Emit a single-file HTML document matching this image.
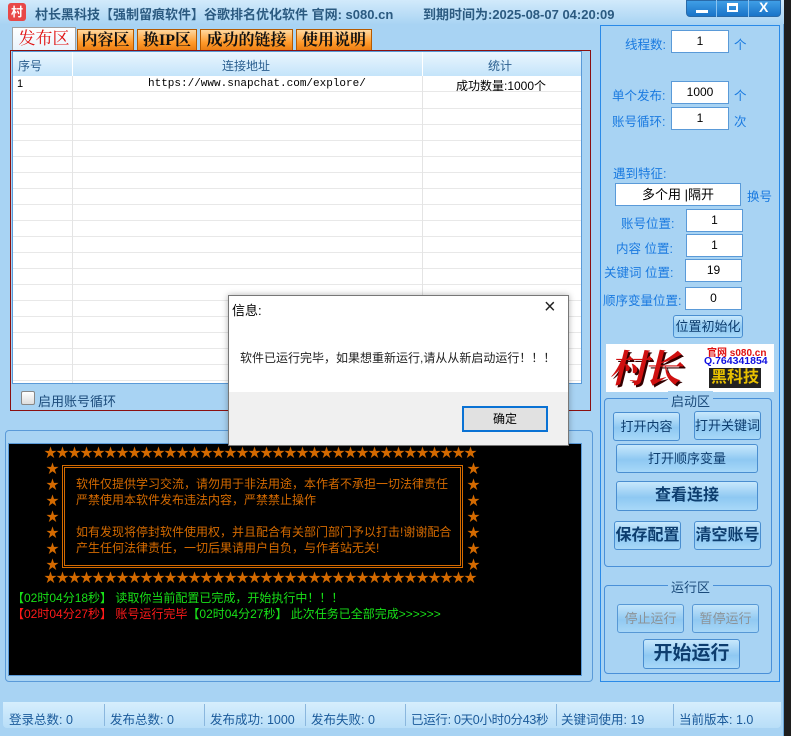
<!DOCTYPE html>
<html><head><meta charset="utf-8"><style>
*{margin:0;padding:0;box-sizing:border-box}
body{width:791px;height:736px;overflow:hidden;background:#1e1e1e;font-family:"Liberation Sans","Noto Sans CJK SC",sans-serif;font-size:12px;position:relative}
.a{position:absolute}
.win{left:0;top:0;width:784px;height:736px;background:#a8d3f3;border-right:1px solid #6aa5d8}
.tb{left:0;top:0;width:784px;height:24px;background:linear-gradient(#d2eafb,#a9d4f3)}
.t{white-space:nowrap}
.tab{top:29px;height:22px;border:1px solid #b55a00;border-bottom:none;background:linear-gradient(#ffd9a0,#ff9a2a 60%,#e97a10);font-size:16px;font-weight:bold;color:#111;text-align:center;line-height:21px;font-family:"Liberation Serif","Noto Serif CJK SC",serif}
.inp{background:#fff;border:1px solid #5a9ad8;text-align:center;font-size:12px;line-height:21px;height:23px}
.lb{color:#1a7ae0;font-size:12.5px;white-space:nowrap}
.btn{border:1px solid #4a8ed0;border-radius:3px;background:linear-gradient(#c8e8fc,#8ec8f2 55%,#a8d8f8);color:#0d3d6e;text-align:center;white-space:nowrap}
.stars{display:flex;color:#d46a00;font-size:13px;line-height:16px}
.stars span{width:12px;text-align:center}
.st{color:#d46a00;font-size:13px;line-height:16px}
.ct{color:#d46a00;font-size:12px;line-height:16px;white-space:nowrap}
.sb{top:709px;color:#1a5a9a;font-size:12.5px;white-space:nowrap}
.sep{top:704px;width:1px;height:22px;background:#8ab7de}
</style></head><body>
<div class="a win"></div>
<div class="a tb"></div>
<div class="a" style="left:8px;top:3px;width:18px;height:18px;background:#e84848;border-radius:3px;color:#fff;font-weight:bold;font-size:12px;text-align:center;line-height:18px">村</div>
<div class="a t" style="left:35px;top:4px;font-size:13px;font-weight:bold;color:#2b5a80">村长黑科技【强制留痕软件】谷歌排名优化软件 官网: s080.cn</div>
<div class="a t" style="left:423px;top:4px;font-size:13px;font-weight:bold;color:#2b5a80">到期时间为:2025-08-07 04:20:09</div>
<div class="a" style="left:686px;top:0;width:95px;height:17px;background:linear-gradient(#3f9ee6,#1a74c8);border-radius:0 0 4px 4px;border:1px solid #2a6aa8"></div>
<div class="a" style="left:716px;top:0;width:1px;height:17px;background:#8cc4f0"></div>
<div class="a" style="left:748px;top:0;width:1px;height:17px;background:#8cc4f0"></div>
<div class="a" style="left:696px;top:10px;width:12px;height:3px;background:#fff"></div>
<div class="a" style="left:727px;top:3px;width:11px;height:9px;border:2px solid #fff;border-top-width:3px"></div>
<div class="a t" style="left:759px;top:-1px;color:#fff;font-weight:bold;font-size:14px">X</div>

<div class="a tab" style="left:12px;width:64px;background:linear-gradient(#fff,#e6f2fb);color:#e01010;font-weight:normal;font-size:17px;top:27px;height:25px;border-color:#a0a0a0">发布区</div>
<div class="a tab" style="left:77px;width:57px">内容区</div>
<div class="a tab" style="left:137px;width:60px">换IP区</div>
<div class="a tab" style="left:200px;width:93px">成功的链接</div>
<div class="a tab" style="left:296px;width:76px">使用说明</div>

<div class="a" style="left:10px;top:50px;width:581px;height:361px;border:1px solid #8b1010"></div>
<div class="a" style="left:12px;top:51px;width:570px;height:333px;background:#fff;border:1px solid #5a9ad8;background-image:repeating-linear-gradient(#fff 0 15px,#e8e8e8 15px 16px);background-position:0 41px"></div>
<div class="a" style="left:13px;top:52px;width:568px;height:24px;background:linear-gradient(#eaf6fe,#c4e4fa)"></div>
<div class="a" style="left:13px;top:76px;width:568px;height:16px;background:#fff;border-bottom:1px solid #e8e8e8"></div>
<div class="a" style="left:72px;top:52px;width:1px;height:331px;background:#e4e4e4"></div>
<div class="a" style="left:422px;top:52px;width:1px;height:331px;background:#e4e4e4"></div>
<div class="a" style="left:72px;top:52px;width:1px;height:24px;background:#fff"></div>
<div class="a" style="left:422px;top:52px;width:1px;height:24px;background:#fff"></div>
<div class="a t" style="left:18px;top:57px;color:#2a5e8e">序号</div>
<div class="a t" style="left:222px;top:57px;color:#2a5e8e">连接地址</div>
<div class="a t" style="left:488px;top:57px;color:#2a5e8e">统计</div>
<div class="a t" style="left:17px;top:78px;font-size:11px">1</div>
<div class="a t" style="left:148px;top:78px;font-size:11px;font-family:'Liberation Mono',monospace">https://www.snapchat.com/explore/</div>
<div class="a t" style="left:456px;top:77px;font-size:12px">成功数量:1000个</div>
<div class="a" style="left:21px;top:391px;width:14px;height:14px;border:1px solid #888;border-radius:2px;background:linear-gradient(#fff,#ddd)"></div>
<div class="a t" style="left:38px;top:391px;color:#1a4a7a;font-size:13px">启用账号循环</div>

<div class="a" style="left:5px;top:430px;width:588px;height:252px;border:1px solid #5a9ad8;border-radius:4px"></div>
<div class="a" style="left:8px;top:443px;width:574px;height:233px;background:#000;border:1px solid #5a9ad8"></div>
<div class="a stars" style="left:44px;top:445px"><span>★</span><span>★</span><span>★</span><span>★</span><span>★</span><span>★</span><span>★</span><span>★</span><span>★</span><span>★</span><span>★</span><span>★</span><span>★</span><span>★</span><span>★</span><span>★</span><span>★</span><span>★</span><span>★</span><span>★</span><span>★</span><span>★</span><span>★</span><span>★</span><span>★</span><span>★</span><span>★</span><span>★</span><span>★</span><span>★</span><span>★</span><span>★</span><span>★</span><span>★</span><span>★</span><span>★</span></div>
<div class="a stars" style="left:44px;top:570px"><span>★</span><span>★</span><span>★</span><span>★</span><span>★</span><span>★</span><span>★</span><span>★</span><span>★</span><span>★</span><span>★</span><span>★</span><span>★</span><span>★</span><span>★</span><span>★</span><span>★</span><span>★</span><span>★</span><span>★</span><span>★</span><span>★</span><span>★</span><span>★</span><span>★</span><span>★</span><span>★</span><span>★</span><span>★</span><span>★</span><span>★</span><span>★</span><span>★</span><span>★</span><span>★</span><span>★</span></div>
<div class="a st" style="left:46px;top:461px">★<br>★<br>★<br>★<br>★<br>★<br>★</div>
<div class="a st" style="left:467px;top:461px">★<br>★<br>★<br>★<br>★<br>★<br>★</div>
<div class="a" style="left:62px;top:465px;width:401px;height:103px;border:3px double #d46a00"></div>
<div class="a ct" style="left:76px;top:476px">软件仅提供学习交流，请勿用于非法用途，本作者不承担一切法律责任</div>
<div class="a ct" style="left:76px;top:492px">严禁使用本软件发布违法内容，严禁禁止操作</div>
<div class="a ct" style="left:76px;top:524px">如有发现将停封软件使用权，并且配合有关部门部门予以打击!谢谢配合</div>
<div class="a ct" style="left:76px;top:540px">产生任何法律责任，一切后果请用户自负，与作者站无关!</div>
<div class="a t" style="left:12px;top:589px;color:#18e018;font-size:12px">【02时04分18秒】 读取你当前配置已完成，开始执行中！！！</div>
<div class="a t" style="left:12px;top:605px;color:#ff1a1a;font-size:12px">【02时04分27秒】 账号运行完毕<span style="color:#18e018">【02时04分27秒】 此次任务已全部完成&gt;&gt;&gt;&gt;&gt;&gt;</span></div>

<div class="a" style="left:600px;top:25px;width:180px;height:657px;border:1px solid #2a8ae8"></div>
<div class="a lb" style="left:625px;top:34px">线程数:</div>
<div class="a inp" style="left:671px;top:30px;width:58px">1</div>
<div class="a lb" style="left:734px;top:34px">个</div>
<div class="a lb" style="left:612px;top:85px">单个发布:</div>
<div class="a inp" style="left:671px;top:81px;width:58px">1000</div>
<div class="a lb" style="left:734px;top:85px">个</div>
<div class="a lb" style="left:612px;top:111px">账号循环:</div>
<div class="a inp" style="left:671px;top:107px;width:58px">1</div>
<div class="a lb" style="left:734px;top:111px">次</div>
<div class="a lb" style="left:613px;top:163px">遇到特征:</div>
<div class="a inp" style="left:615px;top:183px;width:126px;font-size:13px">多个用 |隔开</div>
<div class="a lb" style="left:747px;top:186px">换号</div>
<div class="a lb" style="left:621px;top:213px">账号位置:</div>
<div class="a inp" style="left:686px;top:209px;width:57px">1</div>
<div class="a lb" style="left:616px;top:238px">内容 位置:</div>
<div class="a inp" style="left:686px;top:234px;width:57px">1</div>
<div class="a lb" style="left:604px;top:262px">关键词 位置:</div>
<div class="a inp" style="left:685px;top:259px;width:57px">19</div>
<div class="a lb" style="left:603px;top:290px">顺序变量位置:</div>
<div class="a inp" style="left:685px;top:287px;width:57px">0</div>
<div class="a btn" style="left:673px;top:315px;width:70px;height:23px;line-height:21px;font-size:13px">位置初始化</div>

<div class="a" style="left:606px;top:344px;width:168px;height:48px;background:#fff"></div>
<div class="a t" style="left:609px;top:342px;font-size:38px;font-weight:bold;font-style:italic;color:#d01010;letter-spacing:-4px;font-family:'Noto Serif CJK SC',serif;line-height:48px;text-shadow:2px 2px 0 #300">村长</div>
<div class="a t" style="left:707px;top:344px;font-size:10px;font-weight:bold;color:#e01010">官网 s080.cn</div>
<div class="a t" style="left:704px;top:355px;font-size:10.5px;font-weight:bold;color:#1010e0">Q.764341854</div>
<div class="a t" style="left:709px;top:368px;font-size:16px;font-weight:bold;color:#e8c000;background:#222;padding:0 2px;line-height:20px">黑科技</div>

<div class="a" style="left:604px;top:398px;width:168px;height:169px;border:1px solid #4a90d8;border-radius:4px"></div>
<div class="a t" style="left:668px;top:391px;background:#a8d3f3;padding:0 3px;color:#1a4a7a;font-size:13px">启动区</div>
<div class="a btn" style="left:613px;top:412px;width:67px;height:29px;line-height:27px;font-size:13px">打开内容</div>
<div class="a btn" style="left:694px;top:411px;width:67px;height:29px;line-height:27px;font-size:13px">打开关键词</div>
<div class="a btn" style="left:616px;top:444px;width:142px;height:29px;line-height:27px;font-size:13px">打开顺序变量</div>
<div class="a btn" style="left:616px;top:481px;width:142px;height:30px;line-height:28px;font-size:16px;font-weight:bold">查看连接</div>
<div class="a btn" style="left:614px;top:521px;width:67px;height:29px;line-height:27px;font-size:16px;font-weight:bold">保存配置</div>
<div class="a btn" style="left:694px;top:521px;width:67px;height:29px;line-height:27px;font-size:16px;font-weight:bold">清空账号</div>

<div class="a" style="left:604px;top:585px;width:168px;height:89px;border:1px solid #4a90d8;border-radius:4px"></div>
<div class="a t" style="left:668px;top:577px;background:#a8d3f3;padding:0 3px;color:#1a4a7a;font-size:13px">运行区</div>
<div class="a btn" style="left:617px;top:604px;width:67px;height:29px;line-height:27px;font-size:13px;color:#888;opacity:.85">停止运行</div>
<div class="a btn" style="left:692px;top:604px;width:67px;height:29px;line-height:27px;font-size:13px;color:#888;opacity:.85">暂停运行</div>
<div class="a btn" style="left:643px;top:639px;width:97px;height:30px;line-height:28px;font-size:19px;font-weight:bold">开始运行</div>

<div class="a" style="left:3px;top:702px;width:778px;height:26px;background:linear-gradient(#d6eefd,#b8def8);border-radius:0 0 4px 4px"></div>
<div class="a sb" style="left:9px">登录总数: 0</div>
<div class="a sep" style="left:104px"></div>
<div class="a sb" style="left:110px">发布总数: 0</div>
<div class="a sep" style="left:204px"></div>
<div class="a sb" style="left:210px">发布成功: 1000</div>
<div class="a sep" style="left:305px"></div>
<div class="a sb" style="left:311px">发布失败: 0</div>
<div class="a sep" style="left:405px"></div>
<div class="a sb" style="left:411px;letter-spacing:-0.3px">已运行: 0天0小时0分43秒</div>
<div class="a sep" style="left:556px"></div>
<div class="a sb" style="left:561px">关键词使用: 19</div>
<div class="a sep" style="left:673px"></div>
<div class="a sb" style="left:679px">当前版本: 1.0</div>

<div class="a" style="left:228px;top:295px;width:341px;height:151px;background:#fff;border:1px solid #777;box-shadow:0 0 6px rgba(0,0,0,.3)"></div>
<div class="a t" style="left:232px;top:300px;font-size:13px">信息:</div>
<div class="a t" style="left:544px;top:296px;font-size:20px;color:#222">×</div>
<div class="a t" style="left:240px;top:349px;font-size:12px;color:#222">软件已运行完毕，如果想重新运行,请从从新启动运行！！！</div>
<div class="a" style="left:229px;top:392px;width:339px;height:53px;background:#f0f0f0"></div>
<div class="a" style="left:462px;top:406px;width:86px;height:26px;border:2px solid #0a72d4;background:#e1e1e1;text-align:center;line-height:22px;font-size:12px">确定</div>
</body></html>
